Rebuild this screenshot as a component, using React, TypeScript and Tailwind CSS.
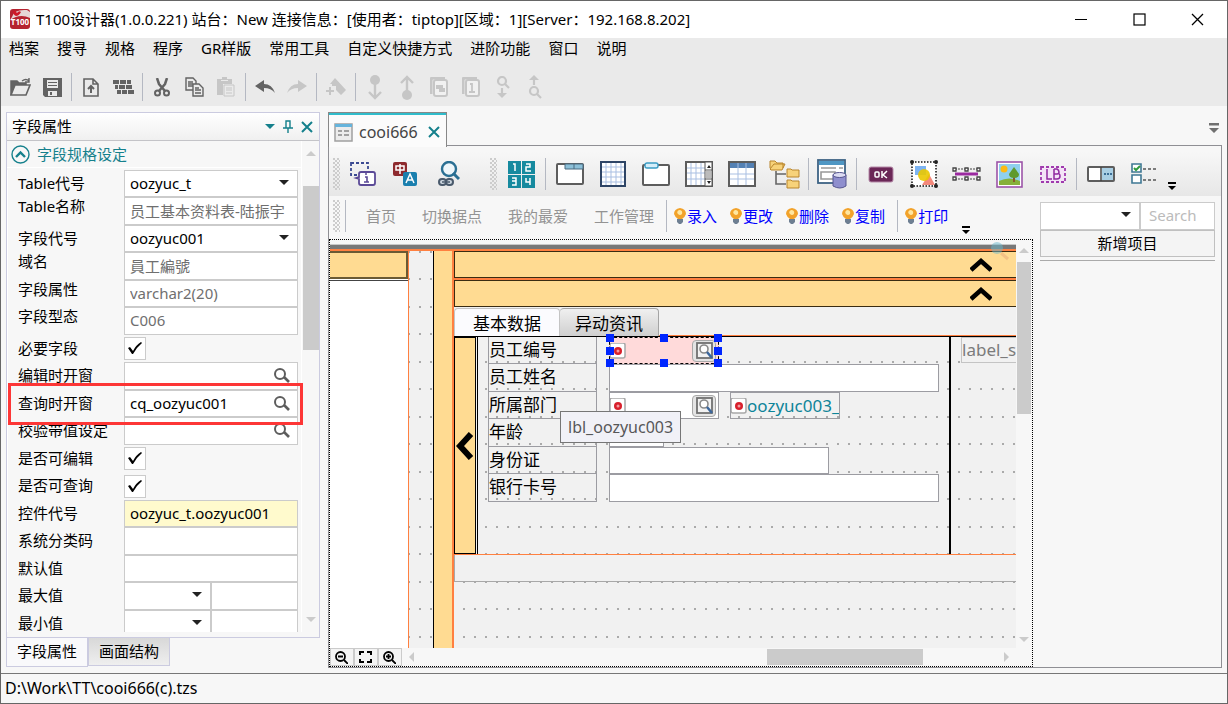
import type { ReactNode } from "react";
import clsx from "clsx";

const menus = ["档案", "搜寻", "规格", "程序", "GR样版", "常用工具", "自定义快捷方式", "进阶功能", "窗口", "说明"];

const dots =
  "bg-[#f1f1f1] bg-[radial-gradient(circle_at_2px_1px,#aaa_1px,transparent_1px),radial-gradient(circle_at_2px_28px,#aaa_1px,transparent_1px)] bg-[length:11px_55px]";

function ToolButton({ label, children, disabled, wide }: { label: string; children: ReactNode; disabled?: boolean; wide?: boolean }) {
  return (
    <button
      aria-label={label}
      disabled={disabled}
      className={clsx("flex h-8 shrink-0 items-center justify-center", wide ? "w-[43px]" : "w-8", disabled ? "text-[#c6c6c6]" : "text-[#636363]")}
    >
      {children}
    </button>
  );
}

function Sep({ className }: { className?: string }) {
  return <div className={clsx("w-px shrink-0 bg-[#b4b8c2]", className)} />;
}

function Grip({ className }: { className?: string }) {
  return (
    <div
      className={clsx(
        "h-8 w-[7px] shrink-0 bg-[radial-gradient(circle_at_1px_1px,#ccc_1px,transparent_1px),radial-gradient(circle_at_3px_3px,#ccc_1px,transparent_1px)] bg-[length:4px_4px]",
        className,
      )}
    />
  );
}

function Arrow({ dir, className }: { dir: "up" | "down" | "left" | "right"; className?: string }) {
  const d = { up: "M0 5L5 0L10 5Z", down: "M0 0L10 0L5 5Z", left: "M5 0L5 10L0 5Z", right: "M0 0L5 5L0 10Z" }[dir];
  const flat = dir === "up" || dir === "down";
  return (
    <svg width={flat ? 10 : 5} height={flat ? 5 : 10} className={className} fill="currentColor">
      <path d={d} />
    </svg>
  );
}

function Overflow({ className, size = 8 }: { className?: string; size?: number }) {
  return (
    <svg width={size} height={size} viewBox="0 0 8 8" className={className} fill="currentColor">
      <path d="M0 0H8V2H0ZM0 4H8L4 8Z" />
    </svg>
  );
}

function MainToolbar() {
  return (
    <div className="flex h-[46px] items-center bg-[#eaeaea] pt-2 pl-[3px]">
      <ToolButton label="打开">
        <svg width="21" height="20" viewBox="0 0 21 20" fill="none">
          <path d="M1 18V4h6l2 2h7v4" stroke="currentColor" strokeWidth="1.5" fill="currentColor" />
          <path d="M1 18L5 8h15l-4 10z" fill="#eaeaea" stroke="currentColor" strokeWidth="1.6" />
          <path d="M12 4q4-3 7 0M19 1v4h-4" stroke="currentColor" strokeWidth="1.4" />
        </svg>
      </ToolButton>
      <ToolButton label="保存">
        <svg width="19" height="19" viewBox="0 0 19 19" fill="currentColor">
          <path d="M0 0H19V19H2L0 17Z" />
          <path d="M4 2H15V10H4ZM5 13H14V18H5Z" fill="#eaeaea" />
          <path d="M5 4H14V5H5ZM5 7H14V8H5ZM7 14H9V17H7Z" />
        </svg>
      </ToolButton>
      <Sep className="mx-[3px] h-7" />
      <ToolButton label="上传">
        <svg width="16" height="19" viewBox="0 0 16 19" fill="none" stroke="currentColor" strokeWidth="1.6">
          <path d="M1 1h9l5 5v12H1zM10 1v5h5" />
          <path d="M8 15V8M5 11l3-3 3 3" strokeWidth="2" />
        </svg>
      </ToolButton>
      <ToolButton label="栅格">
        <svg width="21" height="15" fill="currentColor">
          <path d="M0 0h6v4H0zM7 0h6v4H7zM14 0h4v4h-4zM2 5h3v4H2zM6 5h6v4H6zM13 5h6v4h-6zM4 10h4v4H4zM9 10h5v4H9zM15 10h6v4h-6z" />
        </svg>
      </ToolButton>
      <Sep className="mx-[3px] h-7" />
      <ToolButton label="剪切">
        <svg width="16" height="19" viewBox="0 0 16 19" fill="none" stroke="currentColor" strokeWidth="2">
          <path d="M3 0l2 6 6 7M13 0l-2 6-6 7" strokeWidth="2.5" />
          <circle cx="3.5" cy="15" r="2.5" />
          <circle cx="12.5" cy="15" r="2.5" />
        </svg>
      </ToolButton>
      <ToolButton label="复制格式">
        <svg width="19" height="20" viewBox="0 0 19 20" fill="#eaeaea" stroke="currentColor" strokeWidth="1.4">
          <path d="M1 1h7l3 3v9H1z" />
          <path d="M3 5h5M3 7h5M3 9h5" />
          <path d="M8 7h6l4 4v8H8z" />
          <path d="M10 11h4M10 13h6M10 16h6" />
        </svg>
      </ToolButton>
      <ToolButton label="粘贴" disabled>
        <svg width="18" height="20" viewBox="0 0 18 20" fill="currentColor">
          <path d="M0 2h5V0h5v2h5v5H6v11H0z" />
          <path d="M4 3h7v1H4z" fill="#eaeaea" />
          <path d="M7 8h10v11H7z" fill="#eaeaea" stroke="currentColor" />
          <path d="M9 11h6M9 13h6M9 16h6" stroke="currentColor" />
        </svg>
      </ToolButton>
      <Sep className="mx-[3px] h-7" />
      <ToolButton label="撤销">
        <svg width="20" height="14" fill="currentColor">
          <path d="M0 6L9 0v4q8 0 11 9-4-5-11-5v4z" />
        </svg>
      </ToolButton>
      <ToolButton label="重做" disabled>
        <svg width="20" height="14" fill="currentColor">
          <path d="M20 6L11 0v4q-8 0-11 9 4-5 11-5v4z" />
        </svg>
      </ToolButton>
      <Sep className="mx-[3px] h-7" />
      <ToolButton label="标记" disabled>
        <svg width="20" height="18" fill="currentColor">
          <path d="M4 6L9 0L20 12L15 17L10 12V8H6V6ZM3 9h2v3h3v2H5v3H3v-3H0v-2h3z" />
        </svg>
      </ToolButton>
      <Sep className="mx-[3px] h-7" />
      <ToolButton label="下移" disabled>
        <svg width="16" height="25" viewBox="0 0 16 25" fill="currentColor">
          <circle cx="8" cy="5" r="5" />
          <path d="M8 8v14M2 17l6 6 6-6" fill="none" stroke="currentColor" strokeWidth="2.4" />
        </svg>
      </ToolButton>
      <ToolButton label="上移" disabled>
        <svg width="16" height="25" viewBox="0 0 16 25" fill="currentColor">
          <circle cx="8" cy="20" r="5" />
          <path d="M8 16V2M2 8l6-6 6 6" fill="none" stroke="currentColor" strokeWidth="2.4" />
        </svg>
      </ToolButton>
      <ToolButton label="替换" disabled>
        <svg width="18" height="20" viewBox="0 0 18 20" fill="none" stroke="currentColor" strokeWidth="2">
          <path d="M1 17V3q0-2 2-2h12" strokeWidth="3" />
          <rect x="4" y="3" width="13" height="16" rx="2" fill="#f1f1f1" />
          <path d="M6 8h7v3h2v4H9v-3H6z" fill="currentColor" stroke="none" />
        </svg>
      </ToolButton>
      <ToolButton label="单页" disabled>
        <svg width="18" height="20" viewBox="0 0 18 20" fill="none" stroke="currentColor" strokeWidth="2">
          <path d="M1 17V3q0-2 2-2h12" strokeWidth="3" />
          <rect x="4" y="3" width="13" height="16" rx="2" fill="#f1f1f1" />
          <path d="M8 7h2v8M7 15h6" strokeWidth="1.8" />
        </svg>
      </ToolButton>
      <ToolButton label="往下搜寻" disabled>
        <svg width="14" height="23" viewBox="0 0 14 23" fill="none" stroke="currentColor" strokeWidth="2.2">
          <circle cx="6" cy="5" r="4" />
          <path d="M9 8l4 4M6 12v6" />
          <path d="M1 17h10l-5 5z" fill="currentColor" stroke="none" />
        </svg>
      </ToolButton>
      <ToolButton label="往上搜寻" disabled>
        <svg width="14" height="24" viewBox="0 0 14 24" fill="none" stroke="currentColor" strokeWidth="2.2">
          <circle cx="6" cy="16" r="4" />
          <path d="M9 19l4 4M6 10V4" />
          <path d="M1 5h10L6 0z" fill="currentColor" stroke="none" />
        </svg>
      </ToolButton>
    </div>
  );
}

type Field = {
  label: string;
  kind: "select" | "text" | "readonly" | "check" | "lookup" | "key" | "pair";
  value?: string;
};

const fields: Field[] = [
  { label: "Table代号", kind: "select", value: "oozyuc_t" },
  { label: "Table名称", kind: "readonly", value: "员工基本资料表-陆振宇" },
  { label: "字段代号", kind: "select", value: "oozyuc001" },
  { label: "域名", kind: "readonly", value: "員工編號" },
  { label: "字段属性", kind: "readonly", value: "varchar2(20)" },
  { label: "字段型态", kind: "readonly", value: "C006" },
  { label: "必要字段", kind: "check" },
  { label: "编辑时开窗", kind: "lookup", value: "" },
  { label: "查询时开窗", kind: "lookup", value: "cq_oozyuc001" },
  { label: "校验带值设定", kind: "lookup", value: "" },
  { label: "是否可编辑", kind: "check" },
  { label: "是否可查询", kind: "check" },
  { label: "控件代号", kind: "key", value: "oozyuc_t.oozyuc001" },
  { label: "系统分类码", kind: "text", value: "" },
  { label: "默认值", kind: "text", value: "" },
  { label: "最大值", kind: "pair" },
  { label: "最小值", kind: "pair" },
];

const frame = "h-full w-full min-w-0 border border-[#cbcbcb] px-[5px] pb-[2px] text-[15px] leading-5 outline-none";
const box = `${frame} bg-white`;

function Combo({ id, value, label }: { id?: string; value?: string; label?: string }) {
  return (
    <div className="relative h-full min-w-0 flex-1">
      <select id={id} aria-label={label} className={clsx(box, "appearance-none")}>
        <option>{value}</option>
      </select>
      <Arrow dir="down" className="pointer-events-none absolute top-[10px] right-[9px] text-[#222]" />
    </div>
  );
}

function FieldRow({ field, id }: { field: Field; id: string }) {
  const { label, kind, value } = field;
  return (
    <div className={clsx("flex h-[27px] shrink-0 pl-[10px] even:h-7", kind === "readonly" ? "items-start" : "items-center")}>
      <label htmlFor={id} className="w-[106px] shrink-0 pb-[2px] text-[15px] leading-[18px] whitespace-nowrap">
        {label}
      </label>
      <div className="flex h-full w-[174px] items-center">
        {kind === "select" && <Combo id={id} value={value} />}
        {kind === "readonly" && <input id={id} readOnly value={value} className={clsx(box, "text-[#6f6f6f]")} />}
        {kind === "text" && <input id={id} defaultValue={value} className={box} />}
        {kind === "key" && <input id={id} readOnly value={value} className={clsx(frame, "bg-[#fffacd]")} />}
        {kind === "check" && (
          <div className="relative h-[23px] w-[22px]">
            <input id={id} type="checkbox" defaultChecked className="peer block h-full w-full appearance-none border border-[#cbcbcb] bg-white" />
            <svg width="16" height="14" className="pointer-events-none absolute top-1 left-[3px] hidden peer-checked:block">
              <path d="M1 7L3 6L6 10Q9 4 14 1L15 2Q10 6 6 13L5 13Z" />
            </svg>
          </div>
        )}
        {kind === "lookup" && (
          <div className="relative h-full w-full">
            <input id={id} defaultValue={value} className={box} />
            <button aria-label={`${label}选择`} className="absolute top-[5px] right-[7px]">
              <svg width="18" height="17" fill="none" stroke="#5d5d5d">
                <circle cx="7" cy="7" r="5" strokeWidth="2" />
                <path d="M11 10l5 5" strokeWidth="2.6" />
              </svg>
            </button>
          </div>
        )}
        {kind === "pair" && (
          <>
            <Combo id={id} />
            <div className="h-full min-w-0 flex-1">
              <input aria-label={`${label}内容`} className={box} />
            </div>
          </>
        )}
      </div>
    </div>
  );
}

function PropertyPanel() {
  return (
    <aside className="flex w-[314px] shrink-0 flex-col">
      <div className="relative flex min-h-0 flex-1 flex-col border border-[#cbcbe0] pb-[5px]">
        <header className="flex h-7 shrink-0 items-center border-b border-[#c4c4c8] bg-linear-to-b from-white to-[#f0f0f0] pr-[6px] pl-[5px] text-[#15808c]">
          <h2 className="flex-1 pb-[2px] text-[15px] leading-5 text-black">字段属性</h2>
          <button aria-label="选项">
            <Arrow dir="down" />
          </button>
          <button aria-label="固定" className="ml-2">
            <svg width="10" height="13" fill="none" stroke="currentColor" strokeWidth="1.4">
              <path d="M3 1h4v7H3zM7 1v7M0 8h10M5 8v5" />
            </svg>
          </button>
          <button aria-label="关闭面板" className="ml-2">
            <svg width="12" height="12" stroke="currentColor" strokeWidth="2">
              <path d="M1 1l10 10M11 1L1 11" />
            </svg>
          </button>
        </header>
        <div className="flex min-h-0 flex-1">
          <div className="flex min-h-0 flex-1 flex-col overflow-hidden">
            <h3 className="mb-[2px] flex h-[27px] shrink-0 items-center gap-[7px] border-b border-white pl-1 text-[15px] leading-5 text-[#15808c]">
              <svg width="19" height="19" fill="none" stroke="currentColor">
                <circle cx="9.5" cy="9.5" r="8.5" strokeWidth="1.4" />
                <path d="M5 12l4.500-4.500L14 12" strokeWidth="2.4" />
              </svg>
              字段规格设定
            </h3>
            <div className="flex min-h-0 flex-1 flex-col overflow-hidden border-l border-white">
              {fields.map((f, i) => (
                <FieldRow key={f.label} field={f} id={`field-${i}`} />
              ))}
            </div>
          </div>
          <div className="flex w-[18px] flex-col items-center border-l border-white text-[#cbcbcb]">
            <Arrow dir="up" className="mt-[10px]" />
            <div className="mt-[30px] h-[164px] w-4 bg-[#cbcbcb]" />
            <Arrow dir="down" className="mt-auto mb-[10px]" />
          </div>
        </div>
        <div className="pointer-events-none absolute top-[270px] right-4 left-px h-[42px] border-3 border-[#fd3636]" />
      </div>
      <div className="flex h-[30px] shrink-0 items-start text-[15px] leading-5">
        <button className="-mt-px h-[30px] border border-t-0 border-[#cbcbe0] bg-[#f9f9fb] px-[10px] pb-[2px]">字段属性</button>
        <button className="h-7 border border-t-0 border-[#cbcbe0] bg-linear-to-b from-[#d8d8d8] to-[#efefef] px-[10px] pb-[2px]">画面结构</button>
      </div>
    </aside>
  );
}

function DesignToolbar() {
  return (
    <div className="mt-[6px] flex h-[44px] shrink-0 items-center bg-linear-to-b from-[#f7f7f7] to-[#e7e7e7]">
      <Grip className="ml-1" />
      <div className="ml-px flex">
        <ToolButton wide label="信息">
          <svg width="26" height="25" fill="none">
            <path d="M1 1h17v12H1z" stroke="#3b4a92" strokeWidth="1.8" strokeDasharray="3 2" />
            <path d="M11 10h12q2 0 2 2v9q0 2-2 2H11q-2 0-2-2v-4l-3-1 3-1v-3q0-2 2-2z" fill="#fff" stroke="#5b4a97" strokeWidth="1.8" />
            <path d="M15 15h2v5M14 20h5M15 12h2" stroke="#5b4a97" strokeWidth="1.6" />
          </svg>
        </ToolButton>
        <ToolButton wide label="语言">
          <svg width="25" height="25">
            <rect width="14" height="14" rx="2" fill="#8e2a2e" />
            <rect x="10" y="10" width="14" height="14" rx="2" fill="#1a7fae" />
            <path d="M3 4h8v4H3zM7 2v10" fill="none" stroke="#fff" strokeWidth="1.5" />
            <path d="M13 21l4-9 4 9M14 18h6" fill="none" stroke="#fff" strokeWidth="1.5" />
          </svg>
        </ToolButton>
        <ToolButton wide label="查找链接">
          <svg width="22" height="26" fill="none">
            <circle cx="11" cy="8" r="7" fill="#eef6fa" stroke="#2a6f93" strokeWidth="2.4" />
            <path d="M15 12l6 6" stroke="#2a6f93" strokeWidth="3" />
            <rect x="1" y="18" width="7" height="6" rx="3" fill="#ccd5de" stroke="#4a5a6c" strokeWidth="2" />
            <rect x="8" y="18" width="7" height="6" rx="3" fill="#ccd5de" stroke="#4a5a6c" strokeWidth="2" />
            <path d="M4 21h8" stroke="#4a5a6c" strokeWidth="1.500" />
          </svg>
        </ToolButton>
      </div>
      <Grip className="ml-5" />
      <div className="ml-[3px] flex items-center">
        <ToolButton wide label="顺序">
          <svg width="27" height="27" fill="#168a9f">
            <path d="M0 0h13v13H0zM14 0h13v13H14zM0 14h13v13H0zM14 14h13v13H14z" />
            <path
              d="M5 3h2v7M18 3h4v3h-4v4h5M4 17h4v7H4M4 20h4M18 17v4h4M22 17v7"
              fill="none"
              stroke="#fff"
              strokeWidth="1.5"
            />
          </svg>
        </ToolButton>
        <Sep className="mx-[2px] h-8" />
        <ToolButton wide label="页签">
          <svg width="28" height="22" fill="#fff">
            <rect x="1" y="1" width="26" height="20" rx="1" stroke="#5d5d5d" strokeWidth="2" />
            <path d="M9 1h18v5H9zM18 1v5" fill="#8cc0d8" stroke="#4a6a80" />
          </svg>
        </ToolButton>
        <ToolButton wide label="网格">
          <svg width="26" height="26" fill="#fff">
            <rect x="1" y="1" width="24" height="24" stroke="#2e4566" strokeWidth="2" />
            <path d="M6 2v22M11 2v22M16 2v22M21 2v22M2 6h22M2 11h22M2 16h22M2 21h22" stroke="#a9bfe2" />
          </svg>
        </ToolButton>
        <ToolButton wide label="分组">
          <svg width="28" height="24" fill="#fff">
            <rect x="1" y="3" width="26" height="20" rx="1" stroke="#5d5d5d" strokeWidth="2" />
            <rect x="3" y="1" width="13" height="5" rx="2" fill="#d4eefa" stroke="#3a9cc4" strokeWidth="1.4" />
          </svg>
        </ToolButton>
        <ToolButton wide label="滚动网格">
          <svg width="28" height="26" fill="#fff">
            <rect x="1" y="1" width="26" height="24" stroke="#5d5d5d" strokeWidth="2" />
            <path d="M6 2v22M11 2v22M16 2v22M2 7h18M2 12h18M2 18h18" stroke="#a9bfe2" />
            <path d="M20 1h7v24h-7zM20 9h7M20 18h7" stroke="#555" />
            <path d="M21 10h5v7h-5z" fill="#bbb" />
            <path d="M22 7h4l-2-3zM22 20h4l-2 3z" fill="#222" />
          </svg>
        </ToolButton>
        <ToolButton wide label="表格">
          <svg width="28" height="26" fill="#fff">
            <rect x="1" y="1" width="26" height="24" stroke="#5d5d5d" strokeWidth="2" />
            <path d="M2 2h24v5H2z" fill="#5481b4" />
            <path d="M10 2v22M18 2v22M2 13h24M2 18h24" stroke="#a9bfe2" />
          </svg>
        </ToolButton>
        <ToolButton wide label="树">
          <svg width="31" height="31" fill="#f7d27a" stroke="#b9852c">
            <path d="M1 9V2h5l2 2h6v5M1 10l4-5h11l-3 6H2z" />
            <path d="M18 10h4l1 1h7v7H18zM18 21h4l1 1h7v7H18z" />
            <path d="M7 12v13h10M7 15h10" fill="none" stroke="#666" strokeWidth="1.6" />
          </svg>
        </ToolButton>
        <Sep className="mx-[2px] h-8" />
        <ToolButton wide label="数据窗体">
          <svg width="31" height="30" fill="#fff">
            <rect x="1" y="1" width="27" height="23" stroke="#3d6384" strokeWidth="1.8" />
            <path d="M2 2h25v4H2z" fill="#4f97c4" />
            <path d="M4 9h15M22 9h4M4 13h14v7H4z" stroke="#999" fill="none" strokeWidth="1.6" />
            <path d="M16 16v11q7 4 13 0V16z" fill="#8f8fce" stroke="#55558f" />
            <ellipse cx="22.500" cy="16" rx="6.500" ry="2.500" fill="#dcdcf2" stroke="#55558f" />
          </svg>
        </ToolButton>
        <Sep className="mx-[2px] h-8" />
        <ToolButton wide label="按钮">
          <svg width="26" height="17" fill="none">
            <rect x="1" y="1" width="24" height="15" rx="2" fill="#6b2757" stroke="#b58aa8" />
            <rect x="7" y="6" width="4" height="5" rx="1" stroke="#fff" strokeWidth="1.5" />
            <path d="M14 5v7M19 5l-4 4 4 3" stroke="#fff" strokeWidth="1.5" />
          </svg>
        </ToolButton>
        <ToolButton wide label="图形">
          <svg width="28" height="28" fill="none">
            <rect x="2" y="2" width="24" height="24" fill="#fff" stroke="#111" strokeWidth="1.5" strokeDasharray="1.500 1.500" />
            <path d="M5 6h11v9H5z" fill="#7db4f2" />
            <path d="M19 14l6 11H12z" fill="#f4897c" />
            <circle cx="14" cy="15" r="6" fill="#eac800" opacity="0.9" />
            <circle cx="2" cy="2" r="2" fill="#222" />
            <circle cx="26" cy="2" r="2" fill="#222" />
            <circle cx="2" cy="26" r="2" fill="#222" />
            <circle cx="26" cy="26" r="2" fill="#222" />
          </svg>
        </ToolButton>
        <ToolButton wide label="分隔线">
          <svg width="29" height="14" fill="none" stroke="#444">
            <path d="M3 2h22M3 12h22" strokeDasharray="2 1" />
            <path d="M3 7h23" stroke="#9b2aa0" strokeWidth="3" />
            <path d="M1 1h3v3H1zM13 1h3v3h-3zM25 1h3v3h-3zM1 10h3v3H1zM13 10h3v3h-3zM25 10h3v3h-3z" fill="#fff" strokeWidth="1.3" />
          </svg>
        </ToolButton>
        <ToolButton wide label="图片">
          <svg width="27" height="27">
            <rect x="1" y="1" width="25" height="25" fill="#fff" stroke="#9c54a8" strokeWidth="1.6" />
            <path d="M3 3h21v21H3z" fill="#8fd0ee" />
            <path d="M3 20q10-5 21 0v4H3z" fill="#86b03a" />
            <circle cx="8" cy="8" r="3.500" fill="#fdb913" />
            <path d="M17 13h2v8h-2z" fill="#8a5a2a" />
            <path d="M18 6l5 7q0 4-5 4t-5-4z" fill="#5f9a2e" />
          </svg>
        </ToolButton>
        <ToolButton wide label="标签">
          <svg width="26" height="17" fill="none">
            <rect x="1" y="1" width="24" height="15" fill="#f4e3f7" stroke="#a03aae" strokeWidth="1.800" strokeDasharray="3 2" />
            <path d="M7 3v10h5M14 3v10h3q3 0 3-3t-3-2h-3M17 8q2 0 2-2t-2-3h-3" stroke="#9029a0" strokeWidth="1.5" />
          </svg>
        </ToolButton>
        <Sep className="mx-[2px] h-8" />
        <ToolButton wide label="开窗栏位">
          <svg width="28" height="16">
            <rect x="1" y="1" width="26" height="14" rx="1" fill="#fff" stroke="#5d5d5d" strokeWidth="2" />
            <path d="M15 2h11v12H15z" fill="#a9cfe4" />
            <path d="M14 1v14" stroke="#444" strokeWidth="1.500" />
            <path d="M17 7h2v2h-2zM20 7h2v2h-2zM23 7h2v2h-2z" fill="#3c6f96" />
          </svg>
        </ToolButton>
        <ToolButton wide label="复选框组">
          <svg width="26" height="22" fill="#fff">
            <path d="M1 1h9v8H1zM1 12h9v8H1z" stroke="#3f7894" strokeWidth="1.600" />
            <path d="M3 5l2 2 4-4" stroke="#2f9a3e" strokeWidth="2" fill="none" />
            <path d="M12 6h14M12 17h14" stroke="#555" strokeWidth="1.500" strokeDasharray="3 2" />
          </svg>
        </ToolButton>
      </div>
      <Overflow className="mt-6 ml-[3px]" />
    </div>
  );
}

function BulbButton({ children }: { children: ReactNode }) {
  return (
    <button className="flex shrink-0 items-center text-[15px] leading-5 whitespace-nowrap text-[#0000ff]">
      <svg width="14" height="16">
        <path d="M7 0Q13 1 13 6Q12 9 9 11H5Q2 9 1 6Q1 1 7 0Z" fill="#f2a22a" />
        <path d="M6 2Q10 2 9 6Q7 8 5 6Q3 4 6 2Z" fill="#ffe7a0" />
        <path d="M4 11h6v3L8 16H6L4 14z" fill="#6e7f92" />
      </svg>
      {children}
    </button>
  );
}

function ActionBar() {
  return (
    <div className="flex h-[43px] shrink-0 items-center pb-[3px] text-[15px] leading-5">
      <Grip className="ml-1" />
      <Sep className="mx-[5px] h-8" />
      <div className="ml-[15px] flex shrink-0 gap-[26px] text-[#939393]">
        {["首页", "切换据点", "我的最爱", "工作管理"].map((t) => (
          <button key={t}>{t}</button>
        ))}
      </div>
      <Sep className="mr-[6px] ml-3 h-8" />
      <div className="flex gap-3">
        <BulbButton>录入</BulbButton>
        <BulbButton>更改</BulbButton>
        <BulbButton>删除</BulbButton>
        <BulbButton>复制</BulbButton>
      </div>
      <Sep className="mr-[6px] ml-3 h-8" />
      <BulbButton>打印</BulbButton>
      <Overflow className="mt-7 ml-[14px]" />
    </div>
  );
}

function RedDot() {
  return (
    <svg width="16" height="16" className="shrink-0">
      <rect x="0" y="0" width="15" height="15" rx="2" fill="#fff" stroke="#a8a8a8" strokeWidth="1.500" />
      <circle cx="8" cy="8" r="4" fill="#d8202c" />
      <circle cx="8" cy="8" r="1.500" fill="#f49aa0" />
    </svg>
  );
}

function Picker() {
  return (
    <button aria-label="开窗" className="mr-[2px] flex h-[22px] w-6 shrink-0 items-center justify-center rounded-sm border border-[#a8a8a8] bg-[#e4e4e4]">
      <svg width="17" height="17" fill="none">
        <rect x="1" y="1" width="15" height="15" fill="#f2f2f2" stroke="#707070" strokeWidth="1.800" />
        <circle cx="8" cy="7" r="4" fill="#fff" stroke="#8a8a8a" strokeWidth="1.600" />
        <path d="M11 10l5 6" stroke="#3b669c" strokeWidth="2.500" />
      </svg>
    </button>
  );
}

const handles = [
  "-top-1 -left-1",
  "-top-1 left-[50px]",
  "-top-1 -right-1",
  "top-[9px] -left-1",
  "top-[9px] -right-1",
  "-bottom-1 -left-1",
  "-bottom-1 left-[50px]",
  "-bottom-1 -right-1",
];

function FormRow({ id, label, children }: { id: string; label: string; children: ReactNode }) {
  return (
    <div className="flex h-[27px] even:h-7">
      <label htmlFor={id} className="mr-3 w-[109px] shrink-0 border-x border-b border-[#9c9ca2] text-[17px] leading-[25px] whitespace-nowrap">
        {label}
      </label>
      {children}
    </div>
  );
}

const cell = "h-full border border-[#9c9ca2] bg-white outline-none";

function DesignForm() {
  return (
    <div className="relative w-[471px] shrink-0 pl-[10px]">
      <FormRow id="oozyuc001" label="员工编号">
        <div className="relative flex w-[110px] items-center border border-dashed border-black bg-[#ffdada]">
          <RedDot />
          <input id="oozyuc001" className="min-w-0 flex-1 outline-none" />
          <Picker />
          {handles.map((pos) => (
            <span key={pos} className={clsx("absolute size-2 bg-[#0026ff]", pos)} />
          ))}
        </div>
      </FormRow>
      <FormRow id="oozyuc002" label="员工姓名">
        <input id="oozyuc002" className={clsx(cell, "w-[330px]")} />
      </FormRow>
      <FormRow id="oozyuc003" label="所属部门">
        <div className={clsx(cell, "flex w-[110px] items-center")}>
          <RedDot />
          <input id="oozyuc003" className="min-w-0 flex-1 outline-none" />
          <Picker />
        </div>
        <div className="ml-[11px] flex w-[110px] items-center overflow-hidden border border-[#9c9ca2] text-[17px] leading-6 text-[#0e8499]">
          <RedDot />
          oozyuc003_
        </div>
      </FormRow>
      <FormRow id="oozyuc004" label="年龄">
        <input id="oozyuc004" className={clsx(cell, "w-[55px]")} />
      </FormRow>
      <FormRow id="oozyuc005" label="身份证">
        <input id="oozyuc005" className={clsx(cell, "w-[220px]")} />
      </FormRow>
      <FormRow id="oozyuc006" label="银行卡号">
        <input id="oozyuc006" className={clsx(cell, "w-[330px]")} />
      </FormRow>
      <div role="tooltip" className="absolute top-[74px] left-[82px] border border-[#767676] bg-[#f1f1f7] px-[7px] text-[16px] leading-[30px] text-[#575757]">
        lbl_oozyuc003
      </div>
    </div>
  );
}

function FoldBar() {
  return (
    <button aria-label="折叠" className="flex h-[27px] shrink-0 items-center justify-end border border-r-0 border-[#3a2c12] bg-[#ffdb92] pr-6">
      <svg width="22" height="14" fill="none" stroke="#000" strokeWidth="4.500">
        <path d="M1 12L11 3L21 12" />
      </svg>
    </button>
  );
}

const barButton = "flex w-6 items-center justify-center border border-[#cbcbcb] bg-[#f4f4f4] pr-px";

function Canvas() {
  return (
    <div className="relative flex min-h-0 flex-1 flex-col border border-dotted border-black">
      <div className="flex min-h-0 flex-1">
        <div className="flex min-w-0 flex-1 flex-col overflow-hidden">
          <div className="mt-1 h-[5px] shrink-0 border-t border-[#c8c8c8] bg-[#787878]" />
          <div className="h-[2px] shrink-0 bg-[#ff8040]" />
          <div className={clsx("flex min-h-0 flex-1", dots)}>
            <div className="w-[79px] shrink-0 border-r border-[#ff8040] bg-white">
              <div className="h-7 border-2 border-l-0 border-[#6b5a34] bg-[#ffdb92]" />
              <div className="mt-px h-px bg-[#444]" />
            </div>
            <div className="ml-6 w-[21px] shrink-0 border-r-2 border-l border-r-[#ff8040] border-l-black bg-[#ffdb92]" />
            <div className="flex min-w-0 flex-1 flex-col">
              <FoldBar />
              <div className="h-[2px] shrink-0 bg-[#ff8040]" />
              <FoldBar />
              <div className="flex h-[30px] shrink-0 items-end border-b border-black bg-[#f1f1f1] text-[17px] leading-[29px]">
                <button className="h-[28px] w-[106px] rounded-t border border-b-0 border-[#c4c4c4] bg-[#fbfbfe]">基本数据</button>
                <button className="h-[28px] w-[99px] rounded-t border border-b-0 border-l-0 border-[#a4a4a4] bg-linear-to-b from-[#f0f0f0] to-[#cfcfcf]">
                  异动资讯
                </button>
                <div className="h-px flex-1 bg-[#ff8040]" />
              </div>
              <div className="flex h-[217px] shrink-0">
                <button aria-label="向左折叠" className="flex w-[22px] shrink-0 items-center justify-center border border-black bg-[#ffdb92]">
                  <svg width="18" height="28" fill="none" stroke="#000" strokeWidth="6">
                    <path d="M15 2L4 14L15 26" />
                  </svg>
                </button>
                <div className="ml-px w-px shrink-0 bg-black" />
                <DesignForm />
                <div className="w-[2px] shrink-0 bg-black" />
                <div className="ml-[10px] h-[26px] min-w-0 flex-1 overflow-hidden border border-r-0 border-[#c4c4c4] bg-[#f1f1f1] text-[17px] leading-6 text-[#7b7b7b]">
                  label_s
                </div>
              </div>
              <div className="h-px shrink-0 bg-[#ff8040]" />
              <div className="h-[27px] shrink-0 border-b border-l border-[#a8a8a8] bg-[#f1f1f1]" />
            </div>
          </div>
        </div>
        <div className="flex w-4 shrink-0 flex-col items-center text-[#cbcbcb]">
          <Arrow dir="up" className="mt-2" />
          <div className="mt-[9px] h-[152px] w-[14px] bg-[#cbcbcb]" />
          <Arrow dir="down" className="mt-auto mb-[6px]" />
        </div>
      </div>
      <div className="flex h-[18px] shrink-0 items-stretch">
        <button aria-label="缩小" className={barButton}>
          <svg width="13" height="13" fill="none" stroke="#000" strokeWidth="1.800">
            <circle cx="5.500" cy="5.500" r="4.500" />
            <path d="M9 9l4 4M3 5.500h5" />
          </svg>
        </button>
        <button aria-label="适合窗口" className={barButton}>
          <svg width="13" height="12" fill="none" stroke="#000" strokeWidth="2">
            <path d="M1 4V1h4M8 1h4v3M12 8v3H8M5 11H1V8" />
          </svg>
        </button>
        <button aria-label="放大" className={barButton}>
          <svg width="13" height="13" fill="none" stroke="#000" strokeWidth="1.800">
            <circle cx="5.500" cy="5.500" r="4.500" />
            <path d="M9 9l4 4M3 5.500h5M5.500 3v5" />
          </svg>
        </button>
        <div className="mr-4 flex flex-1 items-center pr-[7px] pl-[7px] text-[#cbcbcb]">
          <Arrow dir="left" />
          <div className="mr-[81px] ml-auto h-4 w-[156px] bg-[#cbcbcb]" />
          <Arrow dir="right" />
        </div>
      </div>
      <svg width="22" height="20" fill="none" className="absolute top-[1px] right-[22px] opacity-50">
        <circle cx="9" cy="7" r="6" fill="#6bb8cc" />
        <path d="M13 12l7 6" stroke="#e8a87c" strokeWidth="3" />
      </svg>
    </div>
  );
}

function Document() {
  return (
    <section className="ml-2 flex min-w-0 flex-1 flex-col">
      <div className="flex h-[33px] shrink-0 items-start">
        <div className="relative z-10 flex h-[35px] items-center border border-b-0 border-[#888] bg-[#fbfbfb] shadow-[inset_0_2px_0_#2fbccb]">
          <svg width="19" height="19" className="mt-1 ml-[5px]">
            <rect x="1" y="1" width="17" height="17" fill="#ececec" stroke="#a0a0a0" strokeWidth="1.500" />
            <path d="M1 1h17v3H1z" fill="#66b4dc" />
            <path d="M4 8h4M4 12h4M10 8h5M10 12h5" stroke="#888" strokeWidth="1.600" />
          </svg>
          <span className="mt-1 ml-[6px] text-[16px] leading-5 text-[#444]">cooi666</span>
          <button aria-label="关闭页签" className="mt-1 mr-[6px] ml-[10px]">
            <svg width="12" height="12" stroke="#15808c" strokeWidth="2">
              <path d="M1 1l10 10M11 1L1 11" />
            </svg>
          </button>
        </div>
        <Overflow size={10} className="mt-[11px] mr-[3px] ml-auto text-[#707070]" />
      </div>
      <div className="flex min-h-0 flex-1 flex-col border border-[#8f8f94]">
        <DesignToolbar />
        <div className="flex min-h-0 flex-1">
          <div className="flex min-w-0 flex-1 flex-col">
            <ActionBar />
            <Canvas />
          </div>
          <div className="w-[188px] shrink-0 pt-[6px] pr-[6px] pl-[7px]">
            <div className="flex h-7">
              <div className="flex h-full w-[100px]">
                <Combo label="项目分类" />
              </div>
              <input placeholder="Search" aria-label="Search" className={clsx(box, "flex-1 pl-2 placeholder:text-[#bbb]")} />
            </div>
            <button className="h-[27px] w-full border border-[#c0c0c0] bg-[#f4f4f4] pb-[2px] text-[15px] leading-5">新增项目</button>
            <div className="mt-[3px] h-px bg-[#aaa]" />
          </div>
        </div>
      </div>
    </section>
  );
}

export default function App() {
  return (
    <div className="flex h-screen flex-col overflow-hidden border border-[#666] bg-[#f7f7f7] font-['Noto_Sans','Noto_Sans_CJK_SC',sans-serif] text-black">
      <header className="flex h-[37px] shrink-0 items-center bg-white pb-px pl-[9px]">
        <svg width="20" height="20" className="shrink-0">
          <rect width="20" height="20" rx="3" fill="#b52330" />
          <path d="M2 8Q4 0 17 1L20 3V9Q10 4 0 11Z" fill="#e6d6d6" />
          <path d="M3 2q2-1 4 2 2-3 4-1-2 4-5 4-3-1-3-5z" fill="#d01828" />
          <text x="10" y="16" fontSize="8" fontWeight="700" fill="#fff" textAnchor="middle">T100</text>
        </svg>
        <h1 className="ml-[6px] flex-1 truncate pb-px text-[15px] leading-5">
          T100设计器(1.0.0.221) 站台：New 连接信息：[使用者：tiptop][区域：1][Server：192.168.8.202]
        </h1>
        <div className="flex h-full shrink-0 pr-px">
          <button aria-label="最小化" className="flex w-[58px] items-center justify-center">
            <svg width="12" height="1"><path d="M0 0H12V1H0Z" /></svg>
          </button>
          <button aria-label="最大化" className="flex w-[58px] items-center justify-center">
            <svg width="13" height="13"><rect x="1" y="1" width="11" height="11" fill="none" stroke="#000" strokeWidth="1.200" /></svg>
          </button>
          <button aria-label="关闭" className="flex w-[58px] items-center justify-center">
            <svg width="13" height="13" stroke="#000" strokeWidth="1.300"><path d="M1 1l11 11M12 1L1 12" /></svg>
          </button>
        </div>
      </header>
      <nav className="flex h-[22px] shrink-0 items-center gap-[18px] bg-[#eaeaea] pb-[2px] pl-2 text-[15px] leading-5">
        {menus.map((m) => (
          <button key={m} className="shrink-0">{m}</button>
        ))}
      </nav>
      <MainToolbar />
      <main className="flex min-h-0 flex-1 pt-[6px] pr-[5px] pb-[5px] pl-[5px]">
        <PropertyPanel />
        <Document />
      </main>
      <footer className="flex h-[30px] shrink-0 items-center border-t border-[#777] pb-px pl-1 text-[16px] leading-5">D:\Work\TT\cooi666(c).tzs</footer>
    </div>
  );
}
